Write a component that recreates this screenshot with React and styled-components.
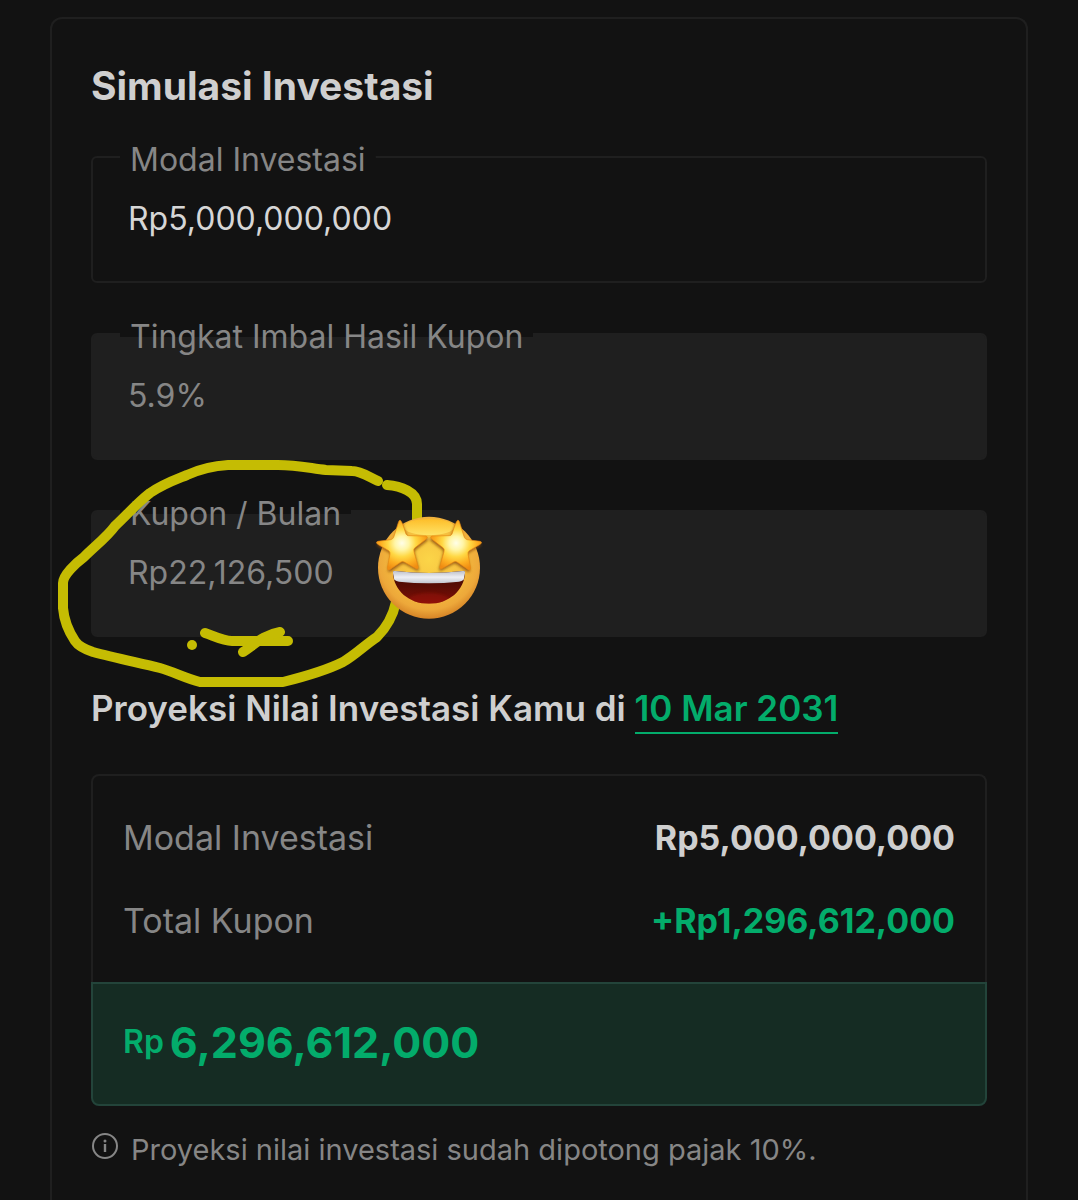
import React from "react";
import styled, { createGlobalStyle } from "styled-components";

const GlobalStyle = createGlobalStyle`
  *, *::before, *::after { box-sizing: border-box; }
  body {
    margin: 0;
    background: #121212;
    color: #cfcfcf;
    font-family: Inter, "Liberation Sans", sans-serif;
  }
`;

const Page = styled.main`
  min-height: 100vh;
  padding: 17px 50px 0;
  display: flex;
`;

const Card = styled.section`
  flex: 1;
  min-width: 0;
  padding: 43px 39px 30px;
  border: 2px solid #1f1f1f;
  border-bottom: 0;
  border-radius: 12px 12px 0 0;
`;

const Title = styled.h1`
  margin: 0 0 46px;
  font-size: 39px;
  line-height: 48px;
  font-weight: 700;
`;

const Form = styled.form`
  display: flex;
  flex-direction: column;
  gap: 50px;
`;

const Field = styled.div`
  position: relative;
`;

const FieldLabel = styled.label`
  position: absolute;
  top: -16px;
  left: 29px;
  padding: 0 10px;
  font-size: 32px;
  line-height: 40px;
  font-weight: 400;
  color: #868686;
  background: linear-gradient(#121212, #121212) no-repeat top / 100% 20px;
`;

const FieldInput = styled.input`
  display: block;
  width: 100%;
  height: 127px;
  padding: 0 35px 3px;
  border: 2px solid #1f1f1f;
  border-radius: 6px;
  outline: 0;
  background: ${(p) => (p.readOnly ? "#1f1f1f" : "transparent")};
  color: ${(p) => (p.readOnly ? "#868686" : "#d6d6d6")};
  font-family: inherit;
  font-size: 32px;
  font-weight: 400;
`;

const Scribble = styled.svg`
  position: absolute;
  top: -60px;
  left: -41px;
  width: 450px;
  height: 250px;
  pointer-events: none;
`;

const Projection = styled.h2`
  margin: 49px 0 40px;
  font-size: 35px;
  line-height: 44px;
  font-weight: 600;
`;

const DateButton = styled.button`
  padding: 0 0 2px;
  border: 0;
  border-bottom: 2px solid #03ac6b;
  background: none;
  color: #03ac6b;
  font: inherit;
  cursor: pointer;
`;

const Breakdown = styled.dl`
  display: flex;
  flex-direction: column;
  gap: 39px;
  margin: 0;
  padding: 40px 30px 39px;
  border: 2px solid #1f1f1f;
  border-bottom: 0;
  border-radius: 8px 8px 0 0;
`;

const Row = styled.div`
  display: flex;
  justify-content: space-between;
  font-size: 34px;
  line-height: 44px;
`;

const RowName = styled.dt`
  font-weight: 400;
  color: #868686;
`;

const RowValue = styled.dd`
  margin: 0;
  font-weight: 700;
  color: ${(p) => (p.$gain ? "#03ac6b" : "#cfcfcf")};
`;

const Total = styled.p`
  display: flex;
  align-items: center;
  gap: 6px;
  margin: 0;
  padding: 32px 30px 36px;
  border: 2px solid #23443a;
  border-radius: 0 0 8px 8px;
  background: #152c23;
  color: #03ac6b;
  font-size: 43px;
  line-height: 52px;
  font-weight: 700;
`;

const Currency = styled.span`
  font-size: 32px;
  font-weight: 600;
`;

const Note = styled.p`
  display: flex;
  gap: 12px;
  margin: 24px 0 0;
  font-size: 29px;
  line-height: 40px;
  font-weight: 400;
  color: #868686;
`;

const InfoIcon = styled.svg`
  flex: none;
  width: 28px;
  height: 32px;
`;

const star =
  "M106 46 Q111 49 123 87 Q125 92 131 92 L184 93 Q190 97 184 102 L149 129 Q145 133 147 140 L160 187 Q159 195 151 190 L118 171 Q113 168 108 171 L74 194 Q67 197 67 189 L75 147 Q76 141 71 137 L37 117 Q31 111 39 109 L77 104 Q83 103 86 97 L101 50 Q103 45 106 46Z";

function Reaction() {
  return (
    <Scribble viewBox="50 450 450 250" aria-hidden="true">
      <defs>
        <radialGradient id="face" cx="0.5" cy="0.42" r="0.6">
          <stop offset="0" stopColor="#fbd548" />
          <stop offset="0.5" stopColor="#f6c03f" />
          <stop offset="0.82" stopColor="#eda83a" />
          <stop offset="1" stopColor="#d17c22" />
        </radialGradient>
        <linearGradient id="shine" x1="0" y1="0" x2="0" y2="1">
          <stop offset="0" stopColor="#ffbf27" />
          <stop offset="1" stopColor="#ffe66a" />
        </linearGradient>
        <radialGradient id="star" cx="0.5" cy="0.46" r="0.55">
          <stop offset="0" stopColor="#fffee8" />
          <stop offset="0.25" stopColor="#fff6a8" />
          <stop offset="0.5" stopColor="#ffd844" />
          <stop offset="0.75" stopColor="#fdb022" />
          <stop offset="1" stopColor="#f08c12" />
        </radialGradient>
        <linearGradient id="mouth" x1="0" y1="0" x2="0" y2="1">
          <stop offset="0" stopColor="#3a0b03" />
          <stop offset="0.5" stopColor="#5a0c04" />
          <stop offset="1" stopColor="#850f07" />
        </linearGradient>
        <linearGradient id="teeth" x1="0" y1="0" x2="0" y2="1">
          <stop offset="0" stopColor="#a9adb8" />
          <stop offset="0.6" stopColor="#eeeff4" />
          <stop offset="1" stopColor="#c3c7d0" />
        </linearGradient>
        <clipPath id="smile">
          <path d="M84 203 Q83 195 92 198 Q192 210 292 198 Q301 195 300 203 C298 256 252 296 192 296 C132 296 86 256 84 203Z" />
        </clipPath>
        <filter id="soft" x="-20%" y="-20%" width="140%" height="140%">
          <feGaussianBlur stdDeviation="4" />
        </filter>
      </defs>
      <g fill="none" stroke="#c5bc03" strokeWidth="10" strokeLinecap="round" strokeLinejoin="round">
        <path d="M378 481 C369 477 361 471 352 471 L326 470 C309 468 297 465 278 465 L228 465 C211 466 198 470 187 475 C172 481 163 484 150 493 C137 503 126 516 115 526 C107 537 95 546 84 557 C76 563 63 575 63 583 L63 608 C64 620 69 632 75 641 C79 647 87 650 93 652 C115 658 140 663 160 668 C174 672 185 678 200 682 L283 682 C303 677 327 670 343 662 C355 655 365 645 377 637 C386 628 393 616 396 602" />
        <path d="M387 485 C401 486 417 492 417 504 L417 525" />
        <path d="M205 633 C214 636 223 641 232 641 L288 641" />
        <path d="M243 652 C254 645 263 635 280 632" />
      </g>
      <circle cx="192" cy="645" r="5" fill="#c5bc03" />
      <g transform="translate(365 505) scale(0.3333)">
        <circle cx="192" cy="188" r="153" fill="url(#face)" />
        <ellipse cx="192" cy="66" rx="76" ry="24" fill="url(#shine)" opacity="0.9" />
        <g fill="#8c4c10" opacity="0.85" filter="url(#soft)">
          <path d={star} transform="translate(2 6)" />
          <path d={star} transform="translate(382 6) scale(-1 1)" />
        </g>
        <g fill="url(#star)" stroke="#e88a14" strokeWidth="2">
          <path d={star} />
          <path d={star} transform="translate(384 0) scale(-1 1)" />
        </g>
        <g clipPath="url(#smile)">
          <rect x="80" y="190" width="224" height="110" fill="url(#mouth)" />
          <ellipse cx="192" cy="292" rx="66" ry="28" fill="#a3130a" opacity="0.4" filter="url(#soft)" />
          <path d="M80 190 L304 190 L296 224 Q290 229 282 230 Q192 239 102 230 Q94 229 88 224Z" fill="url(#teeth)" />
        </g>
      </g>
    </Scribble>
  );
}

const fields = [
  { id: "modal", label: "Modal Investasi", value: "Rp5,000,000,000" },
  { id: "imbal-hasil", label: "Tingkat Imbal Hasil Kupon", value: "5.9%", locked: true },
  { id: "kupon", label: "Kupon / Bulan", value: "Rp22,126,500", locked: true, reaction: true },
];

export default function App() {
  return (
    <>
      <GlobalStyle />
      <Page>
        <Card>
          <Title>Simulasi Investasi</Title>
          <Form>
            {fields.map((f) => (
              <Field key={f.id}>
                <FieldInput id={f.id} type="text" defaultValue={f.value} readOnly={f.locked} />
                <FieldLabel htmlFor={f.id}>{f.label}</FieldLabel>
                {f.reaction && <Reaction />}
              </Field>
            ))}
          </Form>
          <Projection>
            Proyeksi Nilai Investasi Kamu di <DateButton type="button">10 Mar 2031</DateButton>
          </Projection>
          <Breakdown>
            <Row>
              <RowName>Modal Investasi</RowName>
              <RowValue>Rp5,000,000,000</RowValue>
            </Row>
            <Row>
              <RowName>Total Kupon</RowName>
              <RowValue $gain>+Rp1,296,612,000</RowValue>
            </Row>
          </Breakdown>
          <Total>
            <Currency>Rp</Currency>
            <span>6,296,612,000</span>
          </Total>
          <Note>
            <InfoIcon viewBox="0 0 28 32" aria-hidden="true">
              <circle cx="14" cy="16" r="12" fill="none" stroke="#868686" strokeWidth="2" />
              <circle cx="14" cy="11" r="1.5" fill="#868686" />
              <path d="M14 14v8" stroke="#868686" strokeWidth="2.4" />
            </InfoIcon>
            <span>Proyeksi nilai investasi sudah dipotong pajak 10%.</span>
          </Note>
        </Card>
      </Page>
    </>
  );
}
